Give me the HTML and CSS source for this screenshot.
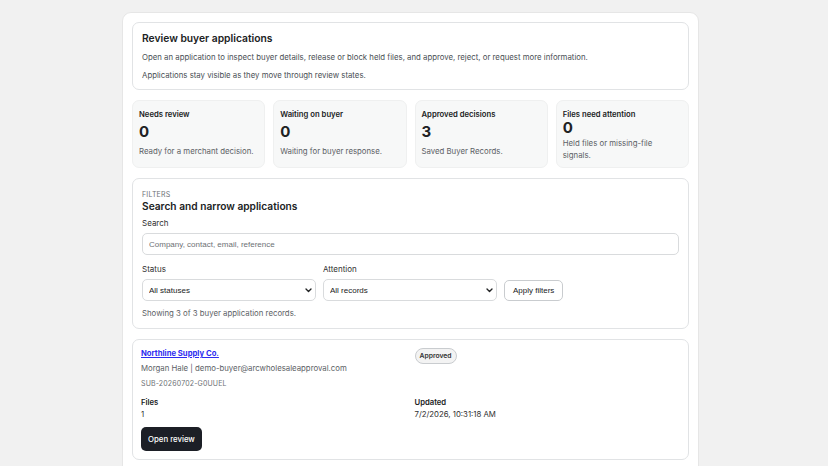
FILE: index.html
```html
<!DOCTYPE html>
<html lang="en">
<head>
<meta charset="utf-8">
<title>Review buyer applications</title>
<link rel="stylesheet" href="styles.css">
</head>
<body>
<main class="panel">
  <section class="card intro">
    <h1>Review buyer applications</h1>
    <p>Open an application to inspect buyer details, release or block held files, and approve, reject, or request more information.</p>
    <p>Applications stay visible as they move through review states.</p>
  </section>

  <section class="stats">
    <div class="stat">
      <div class="stat-label">Needs review</div>
      <div class="stat-num">0</div>
      <div class="stat-desc">Ready for a merchant decision.</div>
    </div>
    <div class="stat">
      <div class="stat-label">Waiting on buyer</div>
      <div class="stat-num">0</div>
      <div class="stat-desc">Waiting for buyer response.</div>
    </div>
    <div class="stat">
      <div class="stat-label">Approved decisions</div>
      <div class="stat-num">3</div>
      <div class="stat-desc">Saved Buyer Records.</div>
    </div>
    <div class="stat">
      <div class="stat-label">Files need attention</div>
      <div class="stat-num">0</div>
      <div class="stat-desc">Held files or missing-file signals.</div>
    </div>
  </section>

  <section class="card filters">
    <div class="eyebrow">FILTERS</div>
    <h2>Search and narrow applications</h2>
    <label class="field-label" for="q">Search</label>
    <input id="q" class="input" type="text" placeholder="Company, contact, email, reference">
    <div class="filter-row">
      <div class="field">
        <label class="field-label" for="status">Status</label>
        <div class="select-wrap">
          <select id="status" class="select"><option>All statuses</option></select>
          <svg class="chev" viewBox="0 0 8 6" width="7" height="5" aria-hidden="true"><path d="M1 1.2 4 4.2 7 1.2" fill="none" stroke="#202223" stroke-width="1.6" stroke-linecap="round" stroke-linejoin="round"/></svg>
        </div>
      </div>
      <div class="field">
        <label class="field-label" for="att">Attention</label>
        <div class="select-wrap">
          <select id="att" class="select"><option>All records</option></select>
          <svg class="chev" viewBox="0 0 8 6" width="7" height="5" aria-hidden="true"><path d="M1 1.2 4 4.2 7 1.2" fill="none" stroke="#202223" stroke-width="1.6" stroke-linecap="round" stroke-linejoin="round"/></svg>
        </div>
      </div>
      <button class="btn-secondary" type="button">Apply filters</button>
    </div>
    <p class="showing">Showing 3 of 3 buyer application records.</p>
  </section>

  <section class="card app">
    <div class="app-grid">
      <div>
        <div class="app-title"><a class="app-name" href="#">Northline Supply Co.</a></div>
        <div class="app-contact">Morgan Hale | demo-buyer@arcwholesaleapproval.com</div>
        <div class="app-ref">SUB-20260702-G0UUEL</div>
      </div>
      <div class="badge-cell"><span class="badge">Approved</span></div>
      <div>
        <div class="kv-label">Files</div>
        <div class="kv-value">1</div>
      </div>
      <div>
        <div class="kv-label">Updated</div>
        <div class="kv-value">7/2/2026, 10:31:18 AM</div>
      </div>
    </div>
    <button class="btn-primary" type="button">Open review</button>
  </section>
</main>
</body>
</html>
```

FILE: styles.css
```css
* { box-sizing: border-box; }
html, body { margin: 0; padding: 0; }
body {
  background: #f1f1f1;
  font-family: Inter, "Noto Sans", sans-serif;
  color: #202223;
  height: 466px;
  overflow: hidden;
}
.panel {
  width: 577px;
  margin: 12px 0 0 122px;
  background: #fff;
  border: 1px solid #e6e6e6;
  border-radius: 9px;
  padding: 9px;
  display: flex;
  flex-direction: column;
  gap: 10px;
  min-height: 470px;
}
.card {
  border: 1px solid #e1e3e5;
  border-radius: 7px;
  background: #fff;
}
.intro { padding: 8px 9px 8px; }
.intro h1 {
  margin: 0 0 6px;
  font-size: 10.3px;
  font-weight: 600;
  line-height: 15px;
}
.intro p {
  margin: 0;
  font-size: 7.8px;
  line-height: 11px;
  color: #4a4f55;
}
.intro p + p { margin-top: 7px; }

.stats {
  display: grid;
  grid-template-columns: repeat(4, 1fr);
  gap: 8px;
}
.stat {
  background: #f7f8f8;
  border: 1px solid #eff0f0;
  border-radius: 7px;
  padding: 8px 6px 6px;
  display: grid;
  align-content: stretch;
  align-items: start;
  min-height: 68px;
}
.stat-label { font-size: 7.7px; font-weight: 600; line-height: 11px; }
.stat-num { font-size: 15px; font-weight: 700; line-height: 16px; }
.stat-desc { font-size: 7.8px; line-height: 12px; color: #5c6166; }

.filters { padding: 11px 9px 9px; }
.eyebrow { font-size: 7px; color: #6d7175; line-height: 10px; letter-spacing: 0.2px; }
.filters h2 { margin: -1px 0 5px; font-size: 10.2px; font-weight: 600; line-height: 14px; }
.field-label { display: block; font-size: 8px; line-height: 11px; color: #303030; margin-bottom: 4px; }
.input {
  display: block;
  width: 100%;
  height: 22px;
  border: 1px solid #d9dbdd;
  border-radius: 5px;
  padding: 0 6px;
  font-family: "Liberation Sans", Arial, sans-serif;
  font-size: 8px;
  color: #303030;
  background: #fff;
}
.input::placeholder { color: #6d7175; }
.filter-row {
  display: flex;
  align-items: flex-end;
  gap: 7px;
  margin-top: 9px;
}
.field { width: 174px; }
.select-wrap { position: relative; }
.select {
  display: block;
  width: 100%;
  height: 22px;
  border: 1px solid #d9dbdd;
  border-radius: 5px;
  padding: 0 6px;
  font-family: "Liberation Sans", Arial, sans-serif;
  font-size: 8px;
  color: #202223;
  background: #fff;
  appearance: none;
  -webkit-appearance: none;
}
.chev {
  position: absolute;
  right: 4px;
  top: 9px;
  pointer-events: none;
}
.btn-secondary {
  height: 21px;
  padding: 0 8px;
  border: 1px solid #c9cccf;
  border-radius: 5px;
  background: #fff;
  font-family: "Liberation Sans", Arial, sans-serif;
  font-size: 8px;
  color: #202223;
}
.showing { margin: 7px 0 0; font-size: 7.8px; line-height: 11px; color: #5c6166; }

.app { padding: 8px 8px 8px; }
.app-grid {
  display: grid;
  grid-template-columns: 1fr 1fr;
  column-gap: 8px;
  row-gap: 8px;
}
.app-title { font-size: 7.7px; line-height: 12px; }
.app-name {
  font-weight: 700;
  color: #2c2cf0;
}
.app-contact { font-size: 7.8px; color: #5c6166; line-height: 12px; margin-top: 2px; }
.app-ref { font-size: 7px; color: #6d7175; line-height: 11px; margin-top: 4px; letter-spacing: 0.15px; }
.badge-cell { line-height: 0; }
.badge {
  display: inline-block;
  font-size: 6.8px;
  font-weight: 600;
  line-height: 10px;
  padding: 2px 4px;
  border: 1px solid #c9cccf;
  border-radius: 10px;
  background: #f3f3f3;
  color: #303030;
}
.kv-label { font-size: 7.7px; font-weight: 600; line-height: 11px; }
.kv-value { font-size: 7.8px; line-height: 12px; color: #303030; }
.btn-primary {
  margin-top: 7px;
  height: 24px;
  padding: 0 7px;
  border: 0;
  border-radius: 5px;
  background: #1c1f26;
  color: #fff;
  font-family: Inter, sans-serif;
  font-size: 7.8px;
  font-weight: 500;
}
```
